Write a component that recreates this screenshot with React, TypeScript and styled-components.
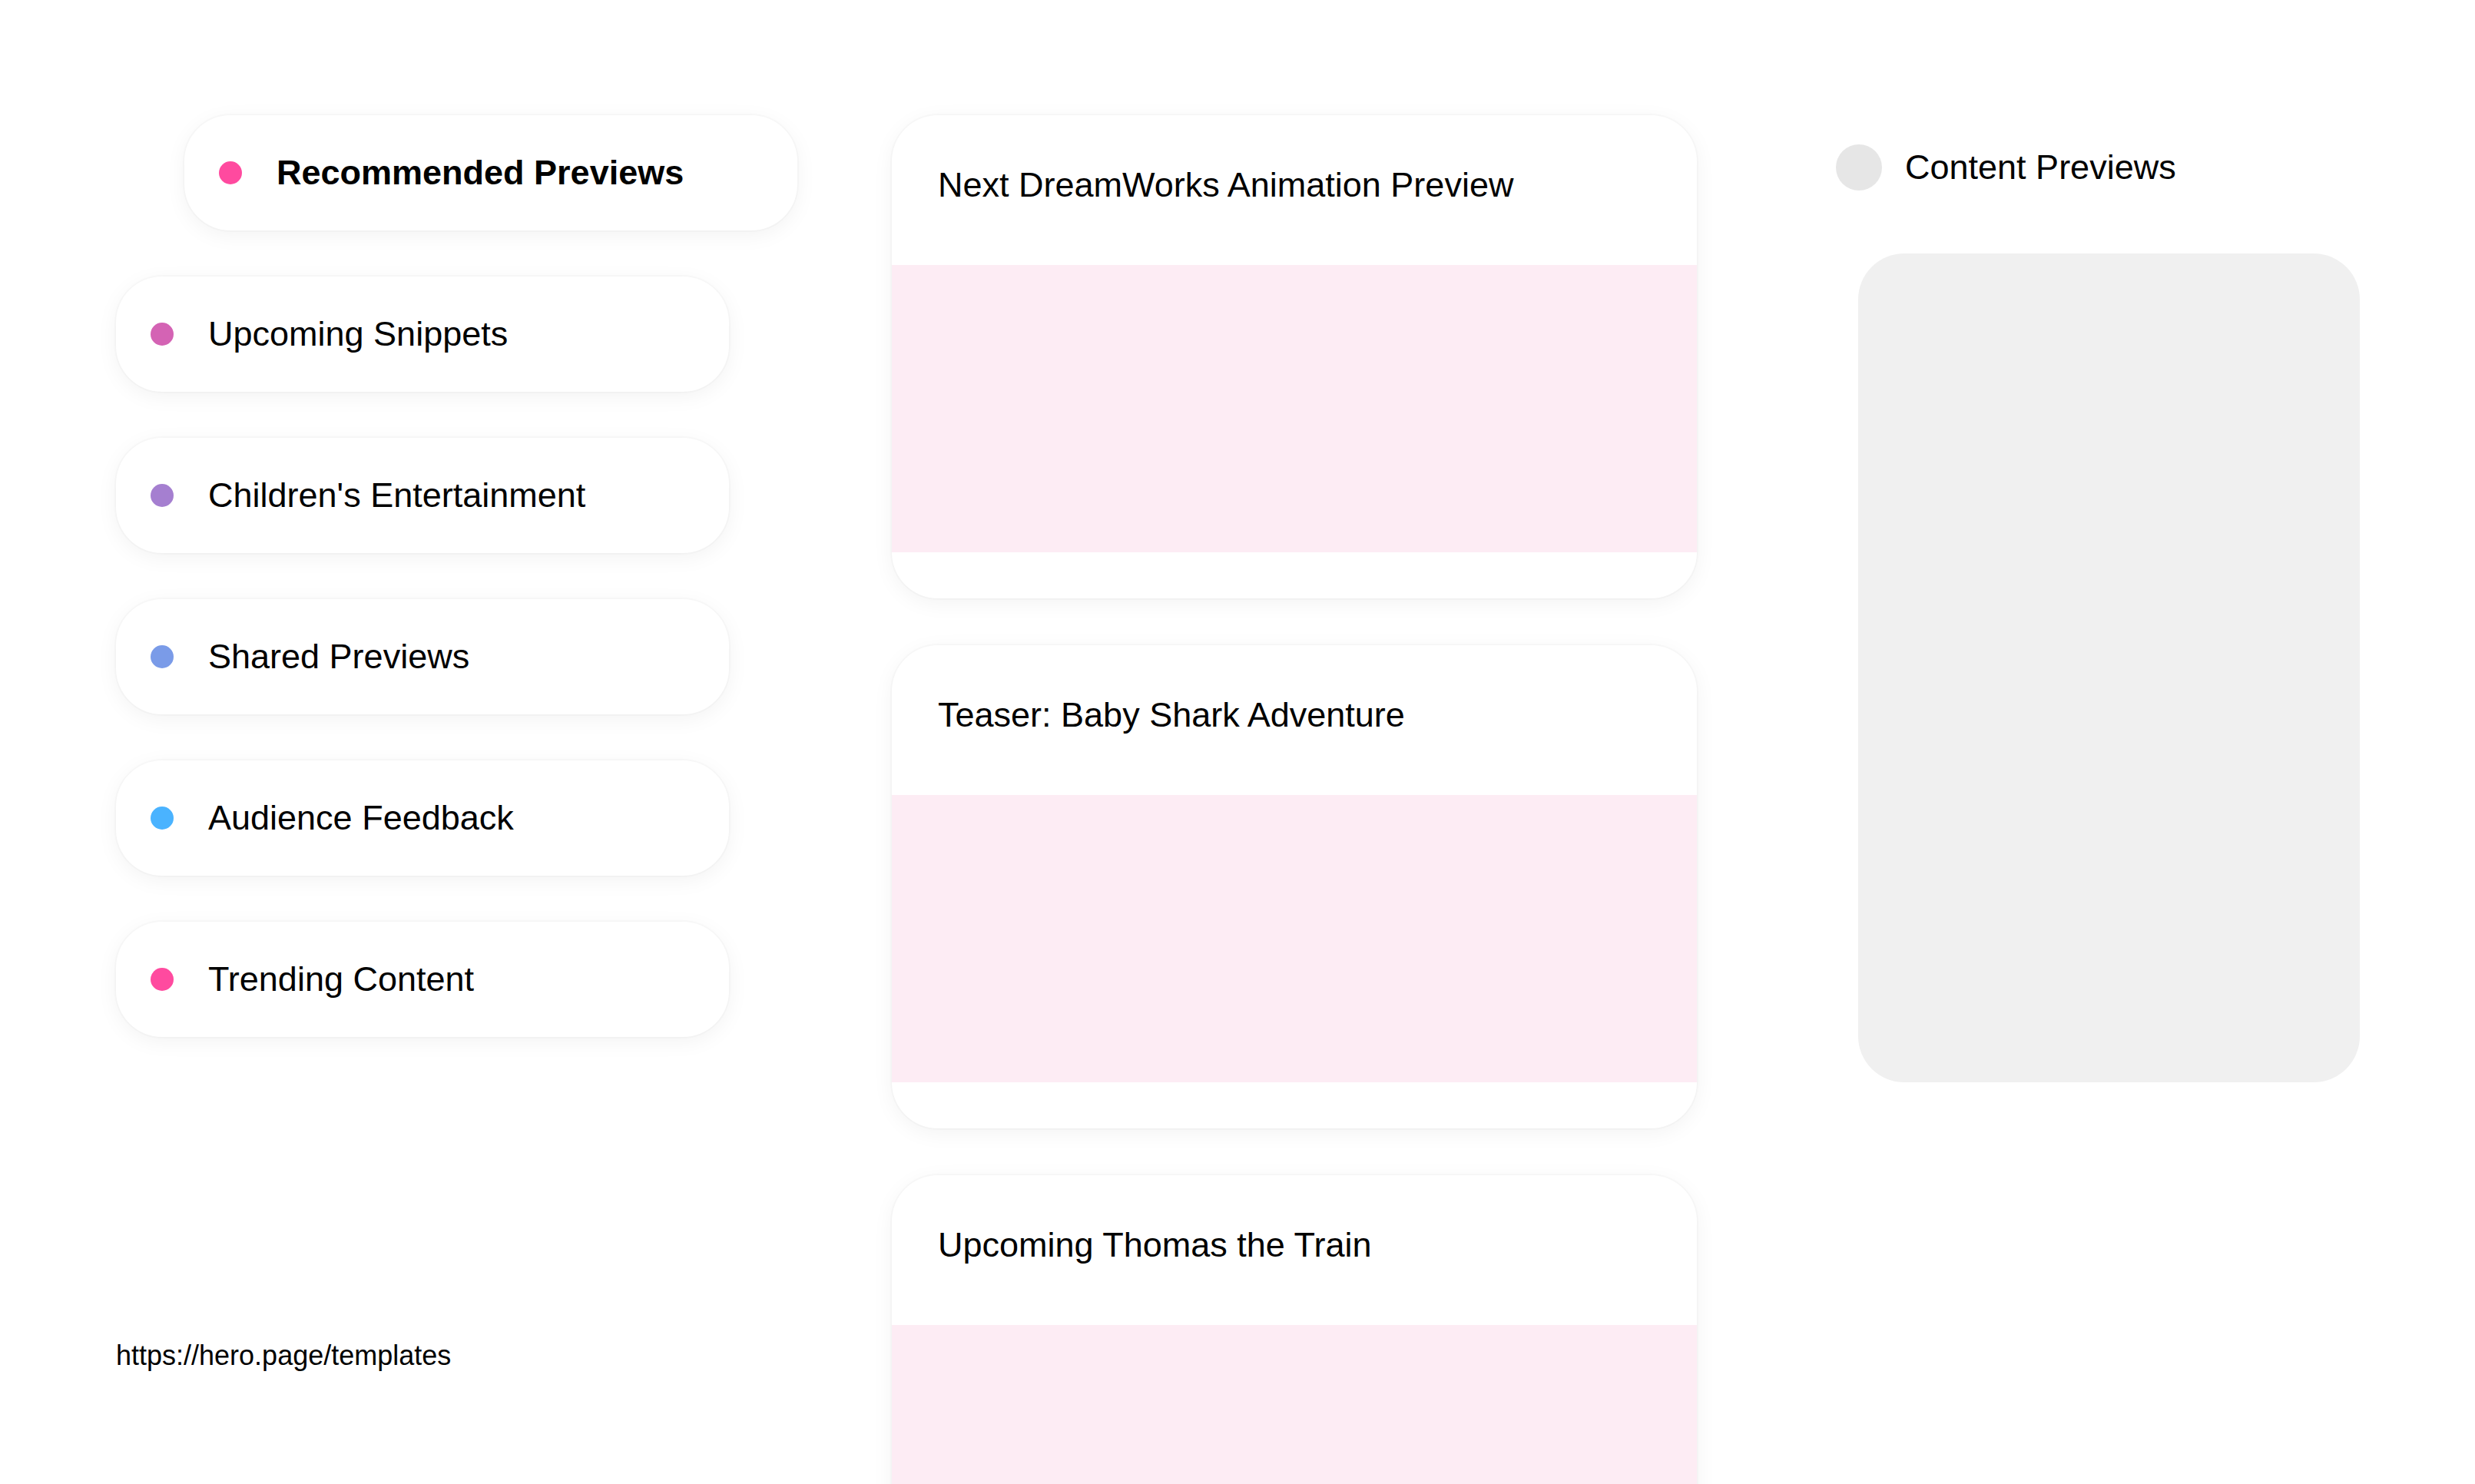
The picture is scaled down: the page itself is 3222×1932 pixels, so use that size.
import { FC } from "react";
import styled, { createGlobalStyle } from "styled-components";

const GlobalStyle = createGlobalStyle`
  html, body {
    margin: 0;
    padding: 0;
    background: #ffffff;
    font-family: "Liberation Sans", Arial, sans-serif;
    color: #000;
  }
`;

const categories = [
  { label: "Recommended Previews", color: "#ff4a9f", active: true },
  { label: "Upcoming Snippets", color: "#d463b4" },
  { label: "Children's Entertainment", color: "#a57fd0" },
  { label: "Shared Previews", color: "#7a9be8" },
  { label: "Audience Feedback", color: "#4ab3ff" },
  { label: "Trending Content", color: "#ff4a9f" },
];

const previews = [
  "Next DreamWorks Animation Preview",
  "Teaser: Baby Shark Adventure",
  "Upcoming Thomas the Train",
];

const App: FC = () => {
  return (
    <>
      <GlobalStyle />
      <Page>
        <Sidebar>
          {categories.map((c) => (
            <CategoryCard key={c.label} $active={!!c.active}>
              <Dot $color={c.color} />
              <CategoryLabel $active={!!c.active}>{c.label}</CategoryLabel>
            </CategoryCard>
          ))}
          <FooterLink href="https://hero.page/templates">https://hero.page/templates</FooterLink>
        </Sidebar>

        <Feed>
          {previews.map((title) => (
            <PreviewCard key={title}>
              <PreviewHeader>{title}</PreviewHeader>
              <PreviewMedia />
              <PreviewFooter />
            </PreviewCard>
          ))}
        </Feed>

        <Aside>
          <AsideHeader>
            <AsideDot />
            <AsideTitle>Content Previews</AsideTitle>
          </AsideHeader>
          <AsidePanel />
        </Aside>
      </Page>
    </>
  );
};

export default App;

const Page = styled.main`
  display: flex;
  align-items: flex-start;
  padding: 150px 0 0 151px;
  box-sizing: border-box;
  width: 3222px;
`;

const Sidebar = styled.nav`
  width: 798px;
  flex-shrink: 0;
  display: flex;
  flex-direction: column;
  gap: 60px;
`;

const CategoryCard = styled.div<{ $active: boolean }>`
  height: 150px;
  box-sizing: border-box;
  display: flex;
  align-items: center;
  gap: 45px;
  padding: 0 45px;
  background: #fff;
  border-radius: 60px;
  box-shadow: 0 0 0 2px rgba(0, 0, 0, 0.02), 0 6px 28px rgba(0, 0, 0, 0.05);
  transform: ${(p) => (p.$active ? "translateX(89px)" : "none")};
`;

const Dot = styled.span<{ $color: string }>`
  width: 30px;
  height: 30px;
  border-radius: 50%;
  flex-shrink: 0;
  background: ${(p) => p.$color};
`;

const CategoryLabel = styled.span<{ $active: boolean }>`
  font-size: 45px;
  font-weight: ${(p) => (p.$active ? 700 : 400)};
  white-space: nowrap;
`;

const FooterLink = styled.a`
  margin-top: 334px;
  font-size: 36px;
  color: #000;
  text-decoration: none;
`;

const Feed = styled.section`
  width: 1048px;
  flex-shrink: 0;
  margin-left: 212px;
  display: flex;
  flex-direction: column;
  gap: 61px;
`;

const PreviewCard = styled.article`
  background: #fff;
  border-radius: 60px;
  overflow: hidden;
  box-shadow: 0 0 0 2px rgba(0, 0, 0, 0.02), 0 6px 28px rgba(0, 0, 0, 0.05);
`;

const PreviewHeader = styled.h3`
  margin: 0;
  height: 195px;
  box-sizing: border-box;
  padding: 65px 60px 0;
  font-size: 45px;
  font-weight: 400;
  line-height: 52px;
`;

const PreviewMedia = styled.div`
  height: 374px;
  background: #fdecf4;
`;

const PreviewFooter = styled.div`
  height: 60px;
`;

const Aside = styled.aside`
  margin-left: 181px;
  width: 683px;
  flex-shrink: 0;
  display: flex;
  flex-direction: column;
  padding-top: 38px;
`;

const AsideHeader = styled.div`
  display: flex;
  align-items: center;
  gap: 30px;
`;

const AsideDot = styled.span`
  width: 60px;
  height: 60px;
  border-radius: 50%;
  background: #e6e6e6;
`;

const AsideTitle = styled.span`
  font-size: 45px;
`;

const AsidePanel = styled.div`
  margin: 82px 0 0 29px;
  width: 653px;
  height: 1079px;
  border-radius: 60px;
  background: #f0f0f0;
`;
